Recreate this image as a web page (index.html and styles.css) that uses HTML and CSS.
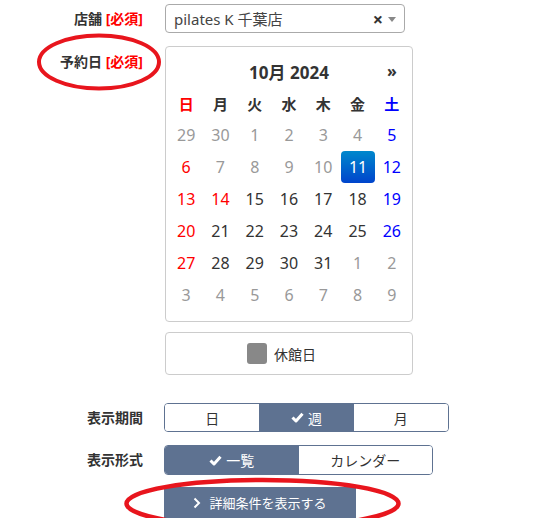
FILE: index.html
```html
<!DOCTYPE html>
<html lang="ja">
<head>
    <meta charset="UTF-8">
    <meta name="viewport" content="width=device-width, initial-scale=1.0">
    <title>予約検索</title>
    <link rel="stylesheet" href="styles.css">
</head>
<body>
    <div class="search-form">
        <div class="form-row center">
            <label class="form-label">店舗 <span class="req">[必須]</span></label>
            <div class="select-box">
                <span class="select-value">pilates K 千葉店</span>
                <span class="select-clear">×</span>
                <span class="select-arrow"></span>
            </div>
        </div>

        <div class="form-row">
            <label class="form-label top">予約日 <span class="req">[必須]</span></label>
            <div>
                <div class="datepicker">
                    <table>
                        <tr class="dp-head">
                            <th></th>
                            <th colspan="5">10月 2024</th>
                            <th class="dp-next">»</th>
                        </tr>
                        <tr class="dp-dow">
                            <th class="sun">日</th><th>月</th><th>火</th><th>水</th><th>木</th><th>金</th><th class="sat">土</th>
                        </tr>
                        <tr>
                            <td class="off">29</td><td class="off">30</td><td class="off">1</td><td class="off">2</td><td class="off">3</td><td class="off">4</td><td class="sat">5</td>
                        </tr>
                        <tr>
                            <td class="sun">6</td><td class="off">7</td><td class="off">8</td><td class="off">9</td><td class="off">10</td><td class="active"><span>11</span></td><td class="sat">12</td>
                        </tr>
                        <tr>
                            <td class="sun">13</td><td class="sun">14</td><td>15</td><td>16</td><td>17</td><td>18</td><td class="sat">19</td>
                        </tr>
                        <tr>
                            <td class="sun">20</td><td>21</td><td>22</td><td>23</td><td>24</td><td>25</td><td class="sat">26</td>
                        </tr>
                        <tr>
                            <td class="sun">27</td><td>28</td><td>29</td><td>30</td><td>31</td><td class="off">1</td><td class="off">2</td>
                        </tr>
                        <tr>
                            <td class="off">3</td><td class="off">4</td><td class="off">5</td><td class="off">6</td><td class="off">7</td><td class="off">8</td><td class="off">9</td>
                        </tr>
                    </table>
                </div>
                <div class="legend">
                    <span class="legend-box"></span>休館日
                </div>
            </div>
        </div>

        <div class="form-row center period-row">
            <label class="form-label plain">表示期間</label>
            <div class="btn-group period">
                <span class="seg">日</span>
                <span class="seg on"><svg class="check" width="13" height="11" viewBox="0 0 13 11"><path d="M1.5 5.5 L5 9 L11.5 1.8" fill="none" stroke="#fff" stroke-width="3" stroke-linejoin="round"/></svg>週</span>
                <span class="seg">月</span>
            </div>
        </div>

        <div class="form-row center style-row">
            <label class="form-label plain">表示形式</label>
            <div class="btn-group style">
                <span class="seg on"><svg class="check" width="13" height="11" viewBox="0 0 13 11"><path d="M1.5 5.5 L5 9 L11.5 1.8" fill="none" stroke="#fff" stroke-width="3" stroke-linejoin="round"/></svg>一覧</span>
                <span class="seg">カレンダー</span>
            </div>
        </div>

        <div class="form-row detail-row">
            <span></span>
            <button class="detail-btn"><svg class="chev" width="8" height="12" viewBox="0 0 8 12"><path d="M1.5 1.5 L6 6 L1.5 10.5" fill="none" stroke="#fff" stroke-width="2"/></svg>詳細条件を表示する</button>
        </div>
    </div>

    <!-- red hand-drawn marks -->
    <svg class="marks" width="543" height="532" viewBox="0 0 543 532">
        <ellipse cx="99" cy="62" rx="60" ry="26.5" fill="none" stroke="#e8151d" stroke-width="4"/>
        <ellipse cx="262.5" cy="503.5" rx="136" ry="23.5" fill="none" stroke="#e8151d" stroke-width="4.5"/>
    </svg>
</body>
</html>
```

FILE: styles.css
```css
body {
    margin: 0;
    font-family: "Noto Sans", "Noto Sans CJK JP", sans-serif;
    font-size: 14px;
    color: #333;
    background: #fff;
    position: relative;
}
.search-form {
    padding-top: 4px;
}
.form-row {
    display: grid;
    grid-template-columns: 143px 248px;
    column-gap: 21px;
    align-items: start;
}
.form-row.center {
    align-items: center;
}
.form-label {
    text-align: right;
    font-weight: bold;
    line-height: 20px;
    color: #333;
}
.form-label.top {
    padding-top: 19px;
}
.req {
    color: #f00;
    font-weight: bold;
}

/* select */
.select-box {
    width: 240px;
    height: 29px;
    box-sizing: border-box;
    border: 1px solid #aaa;
    border-radius: 4px;
    display: flex;
    align-items: center;
    padding: 0 8px;
    margin-left: 1px;
}
.select-value {
    flex: 1;
    color: #444;
    font-size: 15px;
}
.select-clear {
    font-size: 18px;
    font-weight: bold;
    color: #333;
    margin-right: 5px;
}
.select-arrow {
    width: 0;
    height: 0;
    border-left: 4px solid transparent;
    border-right: 4px solid transparent;
    border-top: 5px solid #888;
    margin-top: 2px;
}

/* datepicker */
.datepicker {
    margin-top: 13px;
    margin-left: 1px;
    width: 248px;
    box-sizing: border-box;
    border: 1px solid #ccc;
    border-radius: 4px;
    padding: 8px 3px 10px;
}
.datepicker table {
    border-collapse: collapse;
    table-layout: fixed;
    width: 240px;
}
.datepicker th,
.datepicker td {
    height: 32px;
    padding: 0;
    text-align: center;
}
.dp-head th {
    font-size: 17px;
    font-weight: bold;
    color: #333;
}
.dp-head .dp-next {
    font-size: 16px;
}
.dp-dow th {
    font-size: 15px;
    font-weight: bold;
    color: #333;
}
.datepicker td {
    font-size: 16px;
    color: #333;
}
.datepicker .off {
    color: #999;
}
.datepicker .sun {
    color: #f00;
}
.datepicker .sat {
    color: #00f;
}
.datepicker td.active span {
    display: block;
    height: 32px;
    line-height: 32px;
    margin: 0 0 0 1px;
    border-radius: 4px;
    color: #fff;
    background: linear-gradient(to bottom, #0088cc, #0044cc);
}

/* legend */
.legend {
    margin-top: 10px;
    margin-left: 1px;
    width: 248px;
    height: 43px;
    box-sizing: border-box;
    border: 1px solid #ccc;
    border-radius: 4px;
    display: flex;
    align-items: center;
    padding-left: 81px;
    gap: 7px;
    font-size: 14px;
    color: #333;
}
.legend-box {
    width: 20px;
    height: 21px;
    border-radius: 3px;
    background: #888;
}

/* button groups */
.period-row {
    margin-top: 28px;
    grid-template-columns: 143px 285px;
}
.style-row {
    margin-top: 13px;
    grid-template-columns: 143px 269px;
}
.btn-group {
    display: flex;
    border: 1px solid #5e7291;
    border-radius: 4px;
    overflow: hidden;
    box-sizing: border-box;
}
.btn-group.period {
    height: 29px;
}
.btn-group.style {
    height: 30px;
}
.btn-group.period .seg {
    width: 95px;
}
.btn-group.style .seg {
    width: 134px;
}
.seg {
    display: flex;
    align-items: center;
    justify-content: center;
    color: #333;
    background: #fff;
    font-size: 14px;
}
.seg.on {
    background: #5e7291;
    color: #fff;
}
.check {
    margin-right: 4px;
}

/* detail */
.detail-row {
    margin-top: 12px;
}
.detail-btn {
    width: 192px;
    height: 31px;
    border: none;
    background: #5e7291;
    color: #fff;
    font-family: inherit;
    font-size: 13px;
    padding: 0;
    display: flex;
    align-items: center;
    justify-content: center;
}
.chev {
    margin-right: 8px;
}

.marks {
    position: absolute;
    left: 0;
    top: 0;
    pointer-events: none;
}
```
